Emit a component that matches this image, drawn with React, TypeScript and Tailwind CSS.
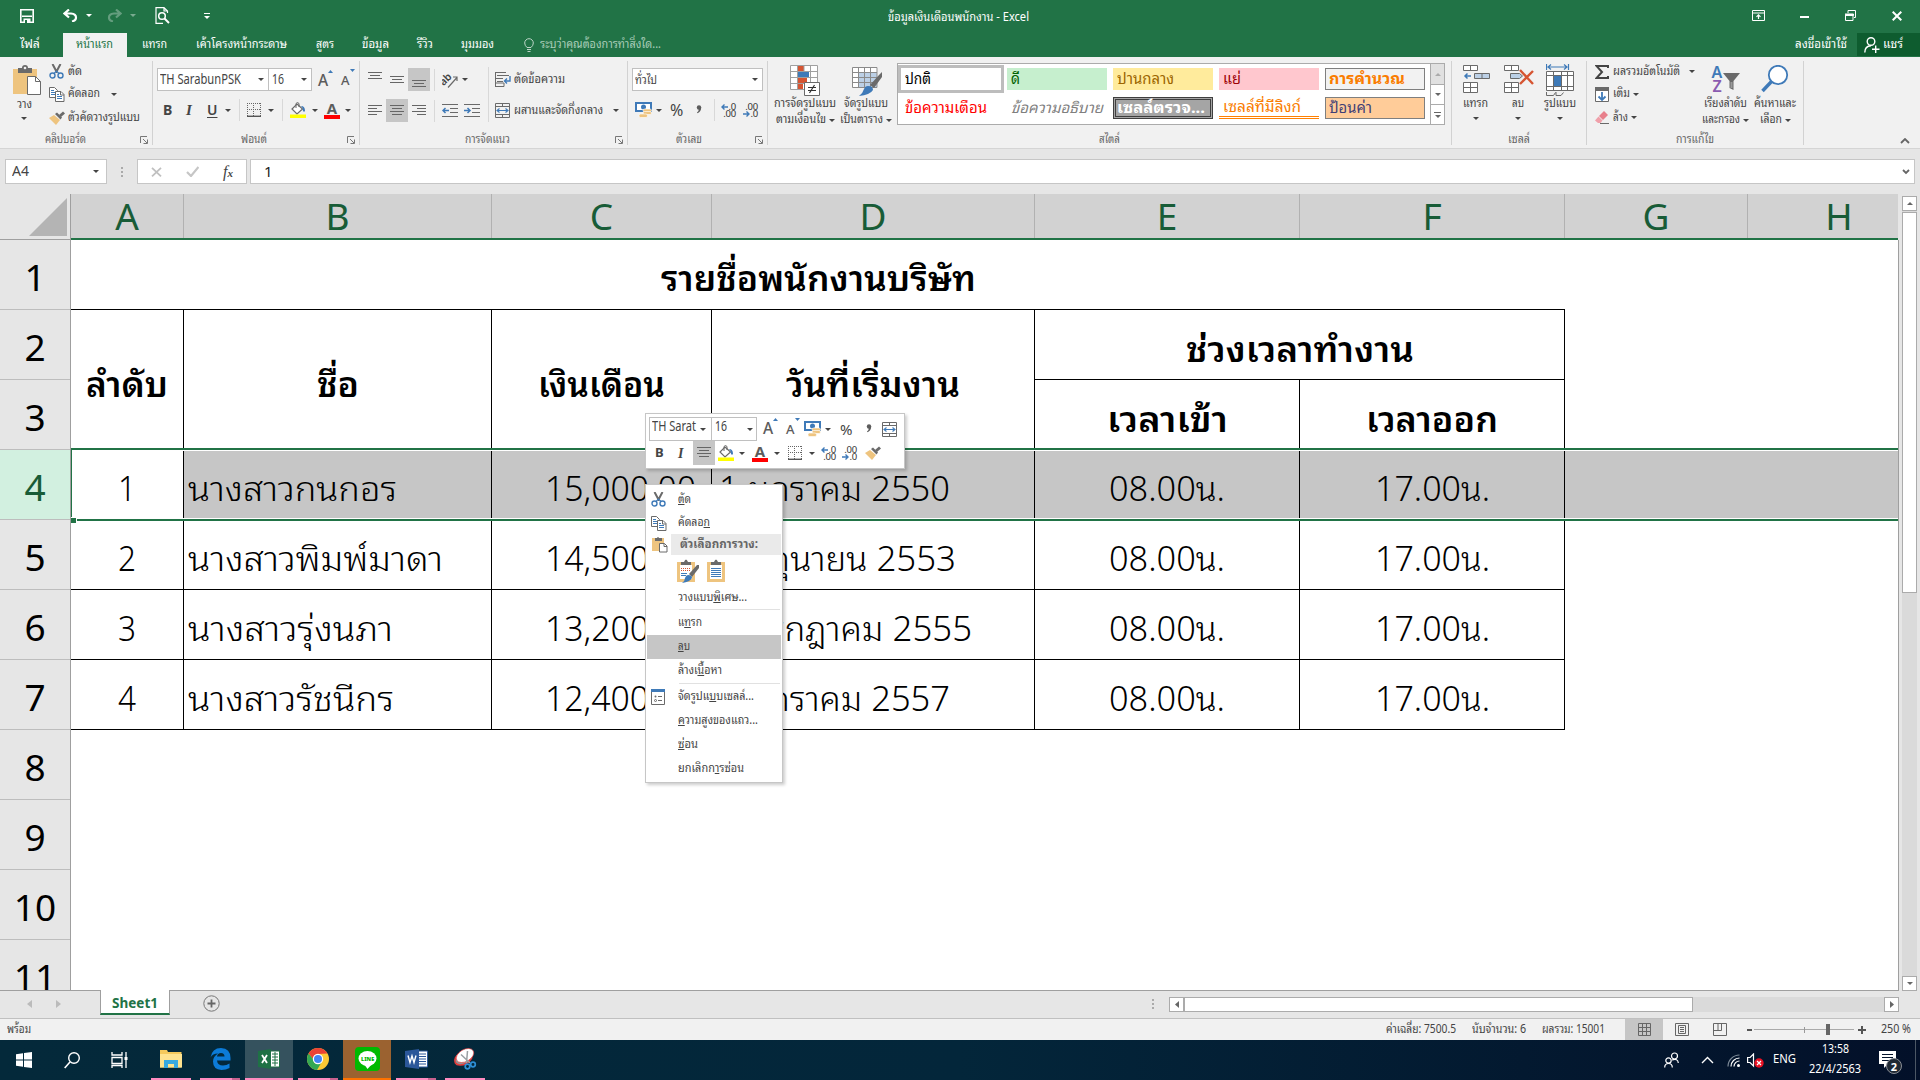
import { useLayoutEffect, useRef, useState, type ReactNode } from "react";
import clsx from "clsx";

type Kids = { children?: ReactNode; className?: string };

/* One line of text, condensed or widened to fill the width its box has. */
function Fit({ children, className }: Kids) {
  const box = useRef<HTMLSpanElement>(null);
  const inner = useRef<HTMLSpanElement>(null);
  const [scale, setScale] = useState(1);
  useLayoutEffect(() => {
    if (box.current && inner.current && inner.current.offsetWidth > 0) {
      setScale(box.current.clientWidth / inner.current.getBoundingClientRect().width);
    }
  }, []);
  return (
    <span ref={box} className={clsx("mb-[2px] block shrink-0 whitespace-nowrap", className)}>
      <span ref={inner} className="inline-block origin-left" style={{ transform: `scaleX(${scale})` }}>
        {children}
      </span>
    </span>
  );
}

function Down({ className }: { className?: string }) {
  return (
    <svg className={clsx("h-[3px] w-[6px] shrink-0", className)} viewBox="0 0 6 3" fill="currentColor">
      <path d="M0 0h6L3 3z" />
    </svg>
  );
}

function Icon({ w, h, className, children }: { w: number; h: number } & Kids) {
  return (
    <svg width={w} height={h} viewBox={`0 0 ${w} ${h}`} fill="none" className={clsx("shrink-0", className)}>
      {children}
    </svg>
  );
}

const G = "#6a6a6a";
const BL = "#3f7ab8";

function Scissors() {
  return (
    <Icon w={15} h={15}>
      <path d="M3.500 0 8 8.500M11.500 0 7 8.500" stroke={G} strokeWidth="2" />
      <circle cx="3.500" cy="11.500" r="2.500" stroke={BL} strokeWidth="1.400" />
      <circle cx="11.500" cy="11.500" r="2.500" stroke={BL} strokeWidth="1.400" />
      <path d="M5 9.500 7.500 7 10 9.500" stroke={BL} strokeWidth="1.200" />
    </Icon>
  );
}
function Copy() {
  return (
    <Icon w={16} h={15}>
      <path d="M.5.5h5l3 3V10.500h-8z" fill="#fff" stroke={G} />
      <path d="M2 3.500h3M2 5.500h4M2 7.500h4" stroke={BL} />
      <path d="M6.500 4.500h5.500l3 3v7H6.500z" fill="#fff" stroke={G} />
      <path d="M11.500 4.500v3.500h3.500" stroke={G} />
      <path d="M8 7.500h2M8 9.500h5M8 11.500h5" stroke={BL} />
    </Icon>
  );
}
function Brush() {
  return (
    <Icon w={16} h={14}>
      <path d="M0 7 5 4l6 5-4 5z" fill="#eec47f" />
      <path d="m6 3 2-1.500 5 5L11.500 8.500z" fill={G} />
      <path d="m10 4 4-3.500L16 2.500 12 6z" fill={G} />
    </Icon>
  );
}
function PasteBig() {
  return (
    <Icon w={28} h={31}>
      <path d="M0 4h24v25H0z" fill="#eec47f" />
      <path d="M5 3h4q0-3 3-3t3 3h4v5H5z" fill={G} />
      <circle cx="12" cy="3" r="1.300" fill="#f1f1f1" />
      <path d="M14.500 11.500h8l5 5v13h-13z" fill="#fff" stroke={G} />
      <path d="M22.500 11.500v5h5" stroke={G} />
    </Icon>
  );
}
function PasteSmall() {
  return (
    <Icon w={16} h={17}>
      <path d="M0 2h12v13H0z" fill="#eec47f" />
      <path d="M3 2h2q1-2 2 0h3v3H3z" fill={G} />
      <path d="M7.500 7.500h5l2.500 2.500v6H7.500z" fill="#fff" stroke={G} />
      <path d="M12 7.500v3h3" stroke={G} />
    </Icon>
  );
}
function Lines({ rows, w = 14 }: { rows: [number, number, number][]; w?: number }) {
  return (
    <Icon w={w} h={12}>
      {rows.map(([x1, x2, y]) => (
        <path key={y} d={`M${x1} ${y + 0.5}H${x2}`} stroke="#666" />
      ))}
    </Icon>
  );
}
const centerRows: [number, number, number][] = [[0, 14, 0], [2, 12, 3], [0, 14, 6], [2, 12, 9]];

function Borders() {
  return (
    <Icon w={14} h={14}>
      <path d="M0 .5h14M0 6.500h14M.5 0v13M6.500 0v13M13.500 0v13" stroke="#666" strokeDasharray="1 1" />
      <path d="M0 13.300h14" stroke="#555" strokeWidth="1.400" />
    </Icon>
  );
}
function Bucket() {
  return (
    <Icon w={16} h={16}>
      <path d="m7 2 5.500 5-5.500 5L2 7z" fill="#fff" stroke={G} strokeWidth="1.200" />
      <path d="M6 6V1.500Q7.500-.5 9 1.500V5" stroke={G} />
      <path d="M11 4q4 0 4 5-1 1.500-2 0l-.5-3z" fill={BL} />
      <path d="M0 12.500h16V16H0z" fill="#ff0" />
    </Icon>
  );
}
function FontColor() {
  return (
    <span className="flex h-[17px] w-4 shrink-0 flex-col items-center">
      <span className="text-[15px] leading-[13px] font-bold text-[#5c5c5c]">A</span>
      <span className="h-1 w-4 bg-[#f00]" />
    </span>
  );
}
function Grow({ up }: { up?: boolean }) {
  return (
    <span className="flex w-[14px] shrink-0 items-start text-[#5c5c5c]">
      <span className={up ? "text-[15.500px] leading-[20px] font-medium" : "text-[13px] leading-[22px] font-medium"}>A</span>
      <svg width="5" height="3" viewBox="0 0 5 3" className="shrink-0" fill={BL}>
        {up ? <path d="M0 3h5L2.500 0z" /> : <path d="M0 0h5L2.500 3z" />}
      </svg>
    </span>
  );
}
function Money() {
  return (
    <Icon w={17} h={16}>
      <path d="M1 1h15v8H1z" fill="#fff" stroke={BL} strokeWidth="2" />
      <circle cx="8.500" cy="5" r="2.500" fill={BL} />
      <g fill="#eec47f" stroke="#fff" strokeWidth=".6">
        <rect x="8" y="7" width="8.500" height="3" rx="1.500" />
        <rect x="8" y="9.500" width="8.500" height="3" rx="1.500" />
        <rect x="4" y="12" width="8.500" height="3.500" rx="1.500" />
      </g>
    </Icon>
  );
}
function CommaMark() {
  return (
    <Icon w={6} h={9}>
      <circle cx="3" cy="2.500" r="2.200" fill="#5c5c5c" />
      <path d="M5.200 2.500Q5.200 6.500 1.500 8.300L1 7.500Q3 6 2.800 4z" fill="#5c5c5c" />
    </Icon>
  );
}
function Merge() {
  return (
    <Icon w={15} h={15}>
      <path d="M.5.5h14v14H.5zM.5 3.500h14M.5 11.500h14M7.500 0v3.500M7.500 11.500V15" stroke={G} />
      <path d="M2 7.500h11M4.500 5.500 2 7.500 4.500 9.500M10.500 5.500 13 7.500 10.500 9.500" stroke={BL} strokeWidth="1.100" />
    </Icon>
  );
}
function Decimals({ less }: { less?: boolean }) {
  const arrow = (
    <svg width="7" height="6" viewBox="0 0 7 6" fill="none" stroke={BL} strokeWidth="1.400" className="shrink-0">
      {less ? <path d="M0 3h6M3.500.5 6 3 3.500 5.500" /> : <path d="M7 3H1M3.500.5 1 3l2.500 2.500" />}
    </svg>
  );
  return (
    <span className="-ml-px flex w-[15px] shrink-0 flex-col text-[9.500px] leading-[7px] tracking-tight text-[#333]">
      <span className="flex items-center justify-end">{less ? ".00" : <>{arrow}.0</>}</span>
      <span className="flex items-center justify-end">{less ? <>{arrow}.0</> : ".00"}</span>
    </span>
  );
}
function Launcher() {
  return (
    <Icon w={8} h={8}>
      <path d="M.5 7V.5H7" stroke="#777" />
      <path d="M3 3l4 4M7.500 3.500v4h-4" stroke="#777" />
    </Icon>
  );
}
function Divider({ className }: { className?: string }) {
  return <span className={clsx("w-px shrink-0 bg-[#d8d8d8]", className)} />;
}

function Group({ className, label, launcher, children }: { label: ReactNode; launcher?: boolean } & Kids) {
  return (
    <section className={clsx("flex h-[84px] shrink-0 flex-col border-r border-[#d2d2d2]", className)}>
      <div className="flex h-[70px] shrink-0">{children}</div>
      <div className="flex h-[18px] shrink-0 items-center">
        <span className="flex flex-1 justify-center text-[#666]">{label}</span>
        {launcher ? <span className="mr-1 -ml-[8px]"><Launcher /></span> : null}
      </div>
    </section>
  );
}

function BigButton({ className, icon, children }: { icon: ReactNode } & Kids) {
  return (
    <div className={clsx("flex shrink-0 flex-col items-center pt-1", className)}>
      <div className="flex h-[31px] shrink-0 items-start">{icon}</div>
      {children}
    </div>
  );
}

function TitleBar() {
  return (
    <header className="flex h-[33px] items-center text-white">
      <div className="flex w-[888px] items-center pb-[2px] pl-5">
        <Icon w={14} h={14}>
          <path d="M.8.8h12.400v12.400H.8z" stroke="#fff" strokeWidth="1.600" />
          <path d="M2 6.500h10v1.500H2zM3.500 9.500h7V14h-7z" fill="#fff" />
          <path d="M5 11h2v3H5z" fill="#217346" />
        </Icon>
        <Icon w={15} h={13} className="ml-[29px]">
          <path d="M6 .5 1.500 4.500 6 8.500M2 4.500h6q5 .5 5 4 0 3-4 4" stroke="#fff" strokeWidth="2.200" />
        </Icon>
        <Down className="ml-[8px] w-[5px]" />
        <Icon w={15} h={13} className="ml-[15px] opacity-30">
          <path d="M9 .5l4.500 4L9 8.500M13 4.500H7q-5 .5-5 4 0 3 4 4" stroke="#fff" strokeWidth="2.200" />
        </Icon>
        <Down className="ml-[8px] w-[5px] opacity-40" />
        <Icon w={15} h={17} className="ml-[19px]">
          <path d="M12.500 6V4L9 .7H1v15.600h7M9 .7V4h3.500" stroke="#fff" strokeWidth="1.200" />
          <circle cx="7" cy="9" r="3.300" stroke="#fff" strokeWidth="1.500" />
          <path d="m9.500 11.500 4.500 4.500" stroke="#fff" strokeWidth="2" />
        </Icon>
        <span className="ml-[34px] flex flex-col items-center gap-[2px]">
          <span className="h-px w-[6px] bg-white" />
          <Down />
        </span>
      </div>
      <Fit className="w-[141px] text-[13px] leading-5">ข้อมูลเงินเดือนพนักงาน - Excel</Fit>
      <div className="ml-auto flex items-center pr-[18px] pb-[2px]">
        <Icon w={13} h={11}>
          <path d="M.5.5h12v10H.5zM.5 3h12" stroke="#fff" />
          <path d="M6.500 9V5M4.500 6.800l2-2 2 2" stroke="#fff" strokeWidth="1.200" />
        </Icon>
        <span className="mt-[3px] ml-[35px] h-[2px] w-[9px] bg-white" />
        <Icon w={11} h={11} className="ml-9">
          <path d="M.5 4.500h7.500v6H.5z" stroke="#fff" />
          <path d="M0 4h8.500v1.500H0zM3 .5h7.500v7H9M3 .5V3" stroke="#fff" />
        </Icon>
        <Icon w={10} h={10} className="ml-9">
          <path d="m.7.7 8.600 8.600M9.300.7.7 9.300" stroke="#fff" strokeWidth="2" />
        </Icon>
      </div>
    </header>
  );
}

function MenuTabs() {
  return (
    <nav className="flex h-6 items-center text-[12px] leading-5 text-white">
      <Fit className="ml-5 w-5">ไฟล์</Fit>
      <div className="ml-[23px] flex h-6 w-16 items-center bg-[#f1f1f1] pl-[13px] text-[#217346]">
        <Fit className="w-[37px]">หน้าแรก</Fit>
      </div>
      <Fit className="ml-[15px] w-[25px]">แทรก</Fit>
      <Fit className="ml-[29px] w-[91px]">เค้าโครงหน้ากระดาษ</Fit>
      <Fit className="ml-[29px] w-[18px]">สูตร</Fit>
      <Fit className="ml-[28px] w-[27px]">ข้อมูล</Fit>
      <Fit className="ml-[28px] w-[16px]">รีวิว</Fit>
      <Fit className="ml-[28px] w-[33px]">มุมมอง</Fit>
      <Icon w={10} h={14} className="ml-[30px] opacity-70">
        <path d="M3 9.500Q.7 7.500.7 5A4.300 4.300 0 0 1 9.300 5Q9.300 7.500 7 9.500zM3 11.500h4M3.500 13.500h3" stroke="#fff" />
      </Icon>
      <Fit className="mb-0 ml-[6px] w-[121px] text-[#a9cdb8]">ระบุว่าคุณต้องการทำสิ่งใด...</Fit>
      <Fit className="ml-auto w-[52px]">ลงชื่อเข้าใช้</Fit>
      <div className="mb-px ml-[10px] flex h-[23px] w-[63px] items-center bg-[#0e5c2f] pl-[7px]">
        <Icon w={16} h={16}>
          <circle cx="7" cy="4.500" r="3.800" stroke="#fff" strokeWidth="1.400" />
          <path d="M.8 15.500Q.8 9 7 8.700M8 12.300h7.500M11.700 8.500V16" stroke="#fff" strokeWidth="1.400" />
        </Icon>
        <Fit className="ml-[3px] w-5">แชร์</Fit>
      </div>
    </nav>
  );
}

function Clipboard() {
  return (
    <Group className="w-[153px]" launcher label={<Fit className="-ml-[18px] w-[41px]">คลิปบอร์ด</Fit>}>
      <BigButton className="ml-3 w-[30px] text-[#444]" icon={<PasteBig />}>
        <Fit className="-ml-[5px] w-[15px] leading-[16px]">วาง</Fit>
        <Down className="mt-[3px] -ml-[6px]" />
      </BigButton>
      <div className="ml-[7px] flex flex-col text-[#444]">
        <div className="flex h-[21px] items-center gap-1"><Scissors /><Fit className="w-[14px]">ตัด</Fit></div>
        <div className="flex h-[24px] items-center gap-[3px]"><Copy /><Fit className="w-8">คัดลอก</Fit><Down className="ml-[8px]" /></div>
        <div className="flex h-[23px] items-center gap-[3px]"><Brush /><Fit className="w-[72px]">ตัวคัดวางรูปแบบ</Fit></div>
      </div>
    </Group>
  );
}

function FontGroup() {
  return (
    <Group className="w-[207px]" launcher label={<Fit className="w-[26px]">ฟอนต์</Fit>}>
      <div className="flex flex-col pt-[7px] pl-[4px] text-[#444]">
        <div className="flex h-[23px] items-center">
          <div className="flex h-[23px] w-[112px] items-center border border-[#c0c0c0] bg-white pl-[2px] text-[14px]">
            <Fit className="w-[81px]">TH SarabunPSK</Fit>
            <Down className="ml-[17px]" />
          </div>
          <div className="-ml-px flex h-[23px] w-[44px] items-center border border-[#c0c0c0] bg-white pl-[3px] text-[14px]">
            <Fit className="w-[12px]">16</Fit>
            <Down className="ml-[17px]" />
          </div>
          <span className="ml-[6px] flex items-center gap-[9px]"><Grow up /><Grow /></span>
        </div>
        <div className="mt-[7px] flex h-[24px] items-center">
          <span className="ml-[6px] w-[9px] text-[14px] font-bold">B</span>
          <span className="ml-[14px] w-[8px] font-['Liberation_Serif'] text-[15px] font-bold italic">I</span>
          <span className="ml-[13px] w-[10px] text-center text-[14px] font-semibold underline underline-offset-2">U</span>
          <Down className="ml-[8px]" />
          <Divider className="ml-[8px] h-[22px]" />
          <span className="ml-[7px]"><Borders /></span>
          <Down className="ml-[7px]" />
          <Divider className="ml-[8px] h-[22px]" />
          <span className="ml-[7px]"><Bucket /></span>
          <Down className="ml-[6px]" />
          <span className="ml-[6px]"><FontColor /></span>
          <Down className="ml-[5px]" />
        </div>
      </div>
    </Group>
  );
}

function AlignGroup() {
  return (
    <Group className="w-[268px]" launcher label={<Fit className="-ml-[8px] w-[45px]">การจัดแนว</Fit>}>
      <div className="flex flex-col pt-[7px] pl-[4px] text-[#444]">
        <div className="flex h-[23px] items-center">
          <span className="flex w-[22px] justify-center pb-[8px]"><Lines rows={[[0, 14, 2], [2, 12, 5], [0, 14, 8]]} /></span>
          <span className="flex w-[22px] justify-center"><Lines rows={[[0, 14, 2], [2, 12, 5], [0, 14, 8]]} /></span>
          <span className="flex h-[23px] w-[22px] items-end justify-center bg-[#c6c6c6] pb-[1px]"><Lines rows={[[0, 14, 2], [2, 12, 5], [0, 14, 8]]} /></span>
          <Divider className="ml-[4px] h-[22px]" />
          <span className="ml-[7px] flex h-[16px] w-[17px] items-center">
            <Icon w={17} h={16}>
              <text x="-2" y="10" transform="rotate(-45 5 8)" fontSize="10.500" fill="#444" fontWeight="600">ab</text>
              <path d="M6 15.500 15 5.500M11 5h4v4" stroke={G} strokeWidth="1.200" />
            </Icon>
          </span>
          <Down className="ml-[3px]" />
        </div>
        <div className="mt-[8px] flex h-[23px] items-center">
          <span className="flex w-[22px] justify-center"><Lines rows={[[0, 14, 0], [0, 9, 3], [0, 14, 6], [0, 9, 9]]} /></span>
          <span className="flex h-[23px] w-[22px] items-center justify-center bg-[#c6c6c6]"><Lines rows={centerRows} /></span>
          <span className="flex w-[22px] justify-center"><Lines rows={[[0, 14, 0], [5, 14, 3], [0, 14, 6], [5, 14, 9]]} /></span>
          <Divider className="ml-[4px] h-[22px]" />
          <Icon w={16} h={13} className="ml-[7px]">
            <path d="M0 .5h16M8 4.500h8M8 8.500h8M0 12.500h16" stroke={G} />
            <path d="M7 6.500H1M3.500 4 1 6.500 3.500 9" stroke={BL} strokeWidth="1.500" />
          </Icon>
          <Icon w={16} h={13} className="ml-[6px]">
            <path d="M0 .5h16M8 4.500h8M8 8.500h8M0 12.500h16" stroke={G} />
            <path d="M0 6.500h6M3.500 4 6 6.500 3.500 9" stroke={BL} strokeWidth="1.500" />
          </Icon>
        </div>
      </div>
      <Divider className="mt-[6px] ml-[8px] h-[55px]" />
      <div className="flex flex-col pt-[7px] pl-[6px] text-[#444]">
        <div className="flex h-[23px] items-center gap-[3px]">
          <Icon w={16} h={15}>
            <path d="M.5 0v15M0 .5h11M2 3.500h12M0 6.500h8M2 9.500h6M0 14.500h9V11H0" stroke={G} />
            <path d="M15 4v5h-5M12 6.500 9.500 9l2.500 2.500" stroke={BL} strokeWidth="1.400" />
          </Icon>
          <Fit className="w-[51px]">ตัดข้อความ</Fit>
        </div>
        <div className="mt-[8px] flex h-[23px] items-center gap-[4px]">
          <Merge />
          <Fit className="w-[89px]">ผสานและจัดกึ่งกลาง</Fit>
          <Down className="ml-[6px]" />
        </div>
      </div>
    </Group>
  );
}

function NumberGroup() {
  return (
    <Group className="w-[140px]" launcher label={<Fit className="-ml-[14px] w-[26px]">ตัวเลข</Fit>}>
      <div className="flex flex-col pt-[7px] pl-[4px] text-[#444]">
        <div className="flex h-[23px] w-[131px] items-center border border-[#c0c0c0] bg-white pl-[2px]">
          <Fit className="w-[22px] text-[13px]">ทั่วไป</Fit>
          <Down className="mr-[4px] ml-auto" />
        </div>
        <div className="mt-[7px] flex h-[24px] items-center">
          <span className="ml-[3px]"><Money /></span>
          <Down className="ml-[4px]" />
          <span className="ml-[8px] w-[14px] text-[16px]">%</span>
          <span className="ml-[12px] pb-[2px]"><CommaMark /></span>
          <Divider className="ml-[12px] h-[22px]" />
          <span className="ml-[7px] flex gap-[8px]"><Decimals /><Decimals less /></span>
        </div>
      </div>
    </Group>
  );
}

function Swatch({ className, children }: Kids) {
  return <div className={clsx("flex h-[22px] w-[100px] items-center pl-1 text-[15px]", className)}>{children}</div>;
}

function StylesGroup() {
  return (
    <Group className="w-[684px]" label={<Fit className="w-[21px]">สไตล์</Fit>}>
      <BigButton
        className="ml-[6px] w-[62px] text-[#444]"
        icon={
          <Icon w={30} h={31} className="mr-px">
            <path d="M0 .5h28v24H0z" fill="#fff" />
            <path d="M8 0h6v6H8zM8 12h9v6H8zM8 18h5v6H8z" fill="#d65532" />
            <path d="M8 6h11v6H8z" fill={BL} />
            <path d="M.5.5h27v24H.5zM7.500 0v24M14 0v6M20.500 0v24M0 6.500h28M0 12.500h28M0 18.500h28" stroke="#a0a0a0" />
            <path d="M14.500 17.500h15v13h-15z" fill="#fff" stroke={G} />
            <path d="M18 22.500h8M18 25.500h8M24.500 20l-5 8" stroke="#333" strokeWidth="1.200" />
          </Icon>
        }
      >
        <Fit className="w-[62px] leading-[14px]">การจัดรูปแบบ</Fit>
        <span className="flex items-center gap-[3px]"><Fit className="w-[50px] leading-[14px]">ตามเงื่อนไข</Fit><Down className="w-[5px]" /></span>
      </BigButton>
      <BigButton
        className="ml-[4px] w-[52px] text-[#444]"
        icon={
          <Icon w={31} h={29} className="mt-[2px] ml-[3px]">
            <path d="M.5.5h25v20H.5z" fill="#fff" />
            <path d="M7 6h18v15H7z" fill="#bcd0e6" />
            <path d="M.5.5h24.500v20H.5zM6.500 0v20M12.500 0v20M18.500 0v20M0 5.500h25M0 10.500h25M0 15.500h25" stroke="#8a8a8a" />
            <path d="m18 18 9-10 3-3v5l-8 11z" fill={G} />
            <path d="M16 19q5 0 5 4-3 5-14 6 4-3 5-7 1-3 4-3z" fill={BL} />
          </Icon>
        }
      >
        <Fit className="w-[44px] leading-[14px]">จัดรูปแบบ</Fit>
        <span className="flex items-center gap-[3px]"><Fit className="w-[43px] leading-[14px]">เป็นตาราง</Fit><Down className="w-[5px]" /></span>
      </BigButton>
      <div className="mt-[2px] ml-[5px] flex h-[62px] w-[548px] border border-[#ababab] bg-white">
        <div className="grid w-[532px] grid-cols-[103px_106px_106px_106px_106px] grid-rows-[30px_28px] items-center">
          <div className="flex h-[28px] w-[106px] items-center border-[3px] border-[#bdbdbd] pl-[4px] text-[15px]"><Fit className="w-[26px]">ปกติ</Fit></div>
          <Swatch className="ml-[6px] bg-[#c6efce] text-[#006100]"><Fit className="w-[9px]">ดี</Fit></Swatch>
          <Swatch className="ml-[6px] bg-[#ffeb9c] text-[#9c6500]"><Fit className="w-[57px]">ปานกลาง</Fit></Swatch>
          <Swatch className="ml-[6px] bg-[#ffc7ce] text-[#9c0006]"><Fit className="w-[18px]">แย่</Fit></Swatch>
          <Swatch className="ml-[6px] border border-[#7f7f7f] bg-[#f2f2f2] pl-[3px] font-bold text-[#fa7d00]"><Fit className="w-[76px]">การคำนวณ</Fit></Swatch>
          <Swatch className="ml-[3px] text-[#f00]"><Fit className="w-[82px]">ข้อความเตือน</Fit></Swatch>
          <Swatch className="ml-[6px] text-[#7f7f7f] italic"><Fit className="w-[92px]">ข้อความอธิบาย</Fit></Swatch>
          <Swatch className="ml-[6px] border-[3px] border-double border-[#3f3f3f] bg-[#a5a5a5] pl-[1px] font-bold text-white"><Fit className="w-[88px]">เซลล์ตรวจ...</Fit></Swatch>
          <Swatch className="ml-[6px] border-b-[3px] border-double border-[#ff8001] text-[#fa7d00]"><Fit className="w-[78px]">เซลล์ที่มีลิงก์</Fit></Swatch>
          <Swatch className="ml-[6px] border border-[#7f7f7f] bg-[#ffcc99] pl-[3px] text-[#3f3f76]"><Fit className="w-[43px]">ป้อนค่า</Fit></Swatch>
        </div>
        <div className="flex w-[14px] flex-col border-l border-[#ababab] text-[#666]">
          <span className="flex h-[20px] items-center justify-center bg-[#e1e1e1] text-[#ababab]"><Down className="rotate-180" /></span>
          <span className="flex h-[20px] items-center justify-center border-t border-[#ababab]"><Down /></span>
          <span className="flex h-[20px] flex-col items-center justify-center gap-[2px] border-t border-[#ababab]"><i className="h-px w-[7px] bg-[#666]" /><Down /></span>
        </div>
      </div>
    </Group>
  );
}

function CellsGroup() {
  return (
    <Group className="w-[135px]" label={<Fit className="w-[22px]">เซลล์</Fit>}>
      <BigButton
        className="ml-[10px] w-[28px] text-[#444]"
        icon={
          <Icon w={27} h={28}>
            <path d="M.5.5h14v5H.5zM7.500.5v5M.5 17.500h14v10H.5zM7.500 17.500v10M.5 22.500h14" fill="#fff" stroke={G} />
            <path d="M11.500 8.500h15v5h-15zM19 8.500v5" fill="#bcd0e6" stroke={G} />
            <path d="M8 11H2M4.500 8.500 2 11l2.500 2.500" stroke={BL} strokeWidth="1.500" />
          </Icon>
        }
      >
        <Fit className="-ml-px w-[25px] leading-[14px]">แทรก</Fit>
        <Down className="mt-[5px]" />
      </BigButton>
      <BigButton
        className="ml-[14px] w-[30px] text-[#444]"
        icon={
          <Icon w={30} h={28}>
            <path d="M.5.5h14v5H.5zM7.500.5v5M.5 17.500h14v10H.5zM7.500 17.500v10M.5 22.500h14" fill="#fff" stroke={G} />
            <path d="M6.500 8.500h9l3 2.500-3 2.500h-9z" fill="#bcd0e6" stroke={G} />
            <path d="M16 5 29 19M29 6 16 19" stroke="#d65532" strokeWidth="2.400" />
          </Icon>
        }
      >
        <Fit className="-ml-[2px] w-[12px] leading-[14px]">ลบ</Fit>
        <Down className="mt-[5px] -ml-[3px]" />
      </BigButton>
      <BigButton
        className="ml-[10px] w-[32px] text-[#444]"
        icon={
          <Icon w={28} h={32} className="-mt-px">
            <path d="M.5 0v6M22.500 0v6M2 3h19M5 .5 2 3l3 2.500M18 .5 21 3l-3 2.500" stroke={BL} strokeWidth="1.200" />
            <path d="M.5 7.500h27v19H.5z" fill="#fff" />
            <path d="M8 12h7v10H8z" fill={BL} />
            <path d="M.5 7.500h27v19H.5zM7.500 7v20M15.500 7v20M21.500 7v20M0 11.500h28M0 22.500h28" stroke={G} />
            <path d="M.5 28v3.500h7l2-3M10 28v3.500h5l2.500-3" stroke={G} />
          </Icon>
        }
      >
        <Fit className="w-[32px] leading-[14px]">รูปแบบ</Fit>
        <Down className="mt-[5px]" />
      </BigButton>
    </Group>
  );
}

function EditGroup() {
  return (
    <Group className="w-[217px]" label={<Fit className="w-[38px]">การแก้ไข</Fit>}>
      <div className="ml-[8px] flex w-[106px] flex-col text-[#444]">
        <div className="flex h-[21px] items-center">
          <Icon w={14} h={14}><path d="M13 3V1H1.500L7 7l-5.500 6H13v-2" stroke="#444" strokeWidth="2" /></Icon>
          <Fit className="ml-1 w-[67px]">ผลรวมอัตโนมัติ</Fit>
          <Down className="ml-[9px]" />
        </div>
        <div className="flex h-[24px] items-center">
          <Icon w={14} h={15}>
            <path d="M.5.5h13v14H.5z" fill="#fff" stroke={G} /><path d="M0 0h14v4H0z" fill={G} />
            <path d="M7 5v8M3.500 9.500 7 13l3.500-3.500" stroke={BL} strokeWidth="1.800" />
          </Icon>
          <Fit className="ml-1 w-[17px]">เติม</Fit>
          <Down className="ml-[3px]" />
        </div>
        <div className="flex h-[23px] items-center">
          <Icon w={14} h={13}>
            <path d="m4 5 5-5 4 4-5 5z" fill="#e8808c" /><path d="M3.500 5.500 7.500 9.500 5.500 12H3L0 9.500z" fill="#f0a0aa" /><path d="M5 12.500h9" stroke={G} />
          </Icon>
          <Fit className="ml-1 w-[15px]">ล้าง</Fit>
          <Down className="ml-[3px]" />
        </div>
      </div>
      <BigButton
        className="ml-[2px] w-[45px] text-[#444]"
        icon={
          <span className="flex h-[28px]">
            <span className="flex w-[11px] flex-col items-center text-[16px] leading-[14px]"><b className="font-semibold text-[#3f7ab8]">A</b><b className="font-semibold text-[#8a5bb0]">Z</b></span>
            <Icon w={17} h={18} className="mt-[7px]"><path d="M0 1h17l-6.500 8v9l-4-2V9z" fill={G} /><path d="M7.500 10v6h2v-6z" fill="#999" /></Icon>
          </span>
        }
      >
        <Fit className="w-[43px] leading-[14px]">เรียงลำดับ</Fit>
        <span className="flex items-center gap-[3px]"><Fit className="w-[38px] leading-[14px]">และกรอง</Fit><Down className="w-[5px]" /></span>
      </BigButton>
      <BigButton
        className="ml-[6px] w-[42px] text-[#444]"
        icon={
          <Icon w={28} h={28}>
            <circle cx="17" cy="10" r="9.200" fill="#fff" stroke={BL} strokeWidth="1.800" />
            <path d="M10.500 16.500 1.500 26" stroke={BL} strokeWidth="3.400" />
          </Icon>
        }
      >
        <Fit className="w-[42px] leading-[14px]">ค้นหาและ</Fit>
        <span className="flex items-center gap-[3px]"><Fit className="w-[22px] leading-[14px]">เลือก</Fit><Down className="w-[5px]" /></span>
      </BigButton>
    </Group>
  );
}

function Ribbon() {
  return (
    <div className="flex h-[92px] border-b border-[#d5d5d5] bg-[#f1f1f1] pt-[4px] text-[12px] leading-5">
      <Clipboard />
      <FontGroup />
      <AlignGroup />
      <NumberGroup />
      <StylesGroup />
      <CellsGroup />
      <EditGroup />
      <div className="flex flex-1 items-end justify-end pr-[10px] pb-[4px]">
        <Icon w={10} h={6}><path d="m1 5 4-4 4 4" stroke="#666" strokeWidth="1.800" /></Icon>
      </div>
    </div>
  );
}

function FormulaBar() {
  return (
    <div className="flex h-[45px] items-start bg-[#e6e6e6] pt-[10px] pl-[5px] text-[15px] text-[#444]">
      <div className="flex h-[25px] w-[102px] items-center border border-[#c6c6c6] bg-white pl-[6px]">
        <Fit className="mb-0 w-[17px]">A4</Fit>
        <Down className="mr-[7px] ml-auto" />
      </div>
      <div className="ml-[14px] flex h-[25px] w-[2px] flex-col justify-center gap-[2px]">
        <i className="size-[2px] bg-[#aaa]" /><i className="size-[2px] bg-[#aaa]" /><i className="size-[2px] bg-[#aaa]" />
      </div>
      <div className="ml-[14px] flex h-[25px] w-[110px] items-center border border-[#c6c6c6] bg-white">
        <Icon w={11} h={10} className="ml-[13px]"><path d="m1 .8 9 8.500M10 .8 1 9.300" stroke="#c0c0c0" strokeWidth="1.800" /></Icon>
        <Icon w={13} h={11} className="ml-6"><path d="m1 6 4 4 7.500-9" stroke="#c6c6c6" strokeWidth="2.200" /></Icon>
        <span className="ml-[24px] font-['Liberation_Serif'] text-[16px] italic">f<span className="text-[11px] font-bold">x</span></span>
      </div>
      <div className="ml-[3px] flex h-[25px] w-[1665px] items-center border border-[#c6c6c6] bg-white pl-[13px] text-[#222]">
        1
        <Icon w={8} h={6} className="mr-[4px] ml-auto"><path d="m1 1 3 3 3-3" stroke="#666" strokeWidth="1.800" /></Icon>
      </div>
    </div>
  );
}

const cols = [
  ["A", "w-[113px]"], ["B", "w-[308px]"], ["C", "w-[220px]"], ["D", "w-[323px]"],
  ["E", "w-[265px]"], ["F", "w-[265px]"], ["G", "w-[183px]"], ["H", "w-[183px]"],
];

const rows = [
  { n: "1", name: "นางสาวกนกอร", nw: "w-[209px]", pay: "15,000.00", date: "1 มกราคม 2550", dw: "w-[231px]" },
  { n: "2", name: "นางสาวพิมพ์มาดา", nw: "w-[255px]", pay: "14,500.00", date: "1 มิถุนายน 2553", dw: "w-[237px]" },
  { n: "3", name: "นางสาวรุ่งนภา", nw: "w-[205px]", pay: "13,200.00", date: "1 กรกฎาคม 2555", dw: "w-[253px]" },
  { n: "4", name: "นางสาวรัชนีกร", nw: "w-[206px]", pay: "12,400.00", date: "1 มกราคม 2557", dw: "w-[231px]" },
];

function Cell({ className, children }: Kids) {
  return <div className={clsx("flex items-center justify-center border-r border-b border-black", className)}>{children}</div>;
}

function Sheet() {
  return (
    <div className="flex h-[797px] bg-[#e6e6e6]">
      <div className="flex h-[797px] w-[1899px] flex-col overflow-hidden">
        <div className="flex h-[46px] shrink-0">
          <div className="flex w-[71px] shrink-0 items-end justify-end border-r border-b border-[#9f9f9f] pr-[3px] pb-[3px]">
            <svg width="38" height="38" viewBox="0 0 38 38"><path d="M38 0v38H0z" fill="#b4b4b4" /></svg>
          </div>
          <div className="flex w-[1827px] shrink-0 overflow-hidden border-b-2 border-[#217346] bg-[#d2d2d2]">
            {cols.map(([c, w]) => (
              <div key={c} className={clsx("flex shrink-0 items-center justify-center border-r border-[#b1b1b1] pb-[1px] text-[37px] leading-none text-[#185c37]", w)}>{c}</div>
            ))}
          </div>
        </div>
        <div className="flex h-[751px] shrink-0 border-b border-[#9f9f9f]">
          <div className="flex w-[71px] shrink-0 flex-col overflow-hidden border-r border-[#9f9f9f] text-[37px] leading-none text-black">
            {[1, 2, 3, 4, 5, 6, 7, 8, 9, 10, 11].map((n) => (
              <div key={n} className={clsx("flex h-[70px] shrink-0 items-center justify-center border-b border-[#bdbdbd] pt-[4px]", n === 4 && "bg-[#d2f0e0] text-[#185c37]")}>{n}</div>
            ))}
          </div>
          <div className="relative w-[1828px] shrink-0 overflow-hidden border-r border-[#9f9f9f] bg-white text-black">
            <div className="grid auto-rows-[70px] grid-cols-[113px_308px_220px_323px_265px_265px_333px] text-[34px] leading-none">
              <Cell className="col-span-6 border-r-0 pt-[9px] font-semibold"><Fit className="w-[315px]">รายชื่อพนักงานบริษัท</Fit></Cell>
              <div />
              <Cell className="row-span-2 pt-[11px] font-semibold"><Fit className="w-[82px]">ลำดับ</Fit></Cell>
              <Cell className="row-span-2 pt-[11px] font-semibold"><Fit className="w-[42px]">ชื่อ</Fit></Cell>
              <Cell className="row-span-2 pt-[11px] font-semibold"><Fit className="w-[127px]">เงินเดือน</Fit></Cell>
              <Cell className="row-span-2 pt-[11px] font-semibold"><Fit className="w-[174px]">วันที่เริ่มงาน</Fit></Cell>
              <Cell className="col-span-2 pt-[10px] font-semibold"><Fit className="w-[228px]">ช่วงเวลาทำงาน</Fit></Cell>
              <div className="row-span-2" />
              <Cell className="pt-[11px] font-semibold"><Fit className="w-[121px]">เวลาเข้า</Fit></Cell>
              <Cell className="pt-[11px] font-semibold"><Fit className="w-[132px]">เวลาออก</Fit></Cell>
              {rows.map((r, i) => {
                const tone = clsx("pt-[9px] font-light", i === 0 && "bg-[#c6c6c6]");
                return [
                  <Cell key={r.n} className="pt-[9px] font-light"><Fit className="w-[18px]">{r.n}</Fit></Cell>,
                  <Cell key={r.name} className={clsx(tone, "justify-start pl-[4px]")}><Fit className={r.nw}>{r.name}</Fit></Cell>,
                  <Cell key={r.pay} className={clsx(tone, "justify-end pr-[15px]")}><Fit className="w-[151px]">{r.pay}</Fit></Cell>,
                  <Cell key={r.date} className={clsx(tone, "justify-start pl-[7px]")}><Fit className={r.dw}>{r.date}</Fit></Cell>,
                  <Cell key={r.n + "in"} className={tone}><Fit className="w-[116px]">08.00น.</Fit></Cell>,
                  <Cell key={r.n + "out"} className={tone}><Fit className="w-[115px]">17.00น.</Fit></Cell>,
                  <div key={r.n + "rest"} className={clsx(i === 0 && "bg-[#c6c6c6]")} />,
                ];
              })}
            </div>
            <div className="absolute top-[208px] left-0 h-[73px] w-full border-y-2 border-[#217346]">
              <div className="h-full border-y border-white" />
            </div>
            <div className="absolute top-[208px] left-0 h-[70px] w-px bg-[#217346]" />
            <div className="absolute top-[277px] left-0 size-[6px] border-t border-r border-white bg-[#217346]" />
          </div>
        </div>
      </div>
      <div className="mt-[2px] ml-[3px] flex h-[795px] w-[15px] flex-col bg-[#dadada]">
        <span className="flex h-[15px] items-center justify-center border border-[#ababab] bg-white text-[#666]"><Down className="rotate-180" /></span>
        <span className="mt-px h-[381px] border border-[#ababab] bg-white" />
        <span className="mt-auto flex h-[15px] items-center justify-center border border-[#ababab] bg-white text-[#666]"><Down /></span>
      </div>
    </div>
  );
}

function SheetTabs() {
  return (
    <div className="flex h-[28px] items-start border-b border-[#c0c0c0] bg-[#e6e6e6]">
      <Icon w={5} h={8} className="mt-[9px] ml-[27px]"><path d="M5 0v8L0 4z" fill="#bbb" /></Icon>
      <Icon w={5} h={8} className="mt-[9px] ml-6"><path d="M0 0v8l5-4z" fill="#bbb" /></Icon>
      <div className="z-10 -mt-px ml-[39px] flex h-[25px] w-[70px] items-center justify-center border-x border-b-2 border-x-[#9f9f9f] border-b-[#217346] bg-white pt-[3px] text-[14px] font-bold text-[#217346]">
        <Fit className="w-[46px]">Sheet1</Fit>
      </div>
      <Icon w={17} h={17} className="mt-[4px] ml-[33px]">
        <circle cx="8.500" cy="8.500" r="7.700" stroke="#777" /><path d="M8.500 4.500v8M4.500 8.500h8" stroke="#666" strokeWidth="1.800" />
      </Icon>
      <div className="mt-[8px] ml-[932px] flex flex-col gap-[2px]">
        <i className="size-[2px] bg-[#aaa]" /><i className="size-[2px] bg-[#aaa]" /><i className="size-[2px] bg-[#aaa]" />
      </div>
      <div className="mt-[6px] ml-[15px] flex h-[15px] w-[730px] bg-[#dadada]">
        <span className="flex w-[15px] items-center justify-center border border-[#ababab] bg-white"><Icon w={4} h={7}><path d="M4 0v7L0 3.500z" fill="#666" /></Icon></span>
        <span className="w-[509px] border border-[#ababab] bg-white" />
        <span className="ml-auto flex w-[15px] items-center justify-center border border-[#ababab] bg-white"><Icon w={4} h={7}><path d="M0 0v7l4-3.500z" fill="#666" /></Icon></span>
      </div>
    </div>
  );
}

function StatusBar() {
  return (
    <div className="flex h-[21px] items-center bg-[#f1f1f1] text-[12px] leading-5 text-[#444]">
      <Fit className="mb-0 ml-[7px] w-[24px]">พร้อม</Fit>
      <Fit className="mb-0 ml-auto w-[70px]">ค่าเฉลี่ย: 7500.5</Fit>
      <Fit className="mb-0 ml-4 w-[54px]">นับจำนวน: 6</Fit>
      <Fit className="mb-0 ml-4 w-[63px]">ผลรวม: 15001</Fit>
      <div className="ml-5 flex h-[21px] w-[38px] items-center justify-center bg-[#c6c6c6]">
        <Icon w={13} h={13}><path d="M.5.5h12v12H.5zM4.500 0v13M8.500 0v13M0 4.500h13M0 8.500h13" stroke="#666" /></Icon>
      </div>
      <Icon w={14} h={13} className="ml-3"><path d="M.5.5h13v12H.5zM3.500 2.500h7v8h-7zM5 4.500h4M5 6.500h4M5 8.500h4" stroke="#666" /></Icon>
      <Icon w={14} h={13} className="ml-6"><path d="M.5.5h13v12H.5zM.5 7.500h8V.5M5 .5v7" stroke="#666" /></Icon>
      <span className="ml-5 h-[2px] w-[5px] bg-[#555]" />
      <Icon w={100} h={13} className="ml-[2px]">
        <path d="M0 6.500h100" stroke="#aaa" /><path d="M50.500 4v6" stroke="#999" /><path d="M72 1h4v11h-4z" fill="#666" />
      </Icon>
      <Icon w={8} h={8} className="ml-[4px]"><path d="M4 0v8M0 4h8" stroke="#555" strokeWidth="2" /></Icon>
      <Fit className="mr-[9px] mb-0 ml-[15px] w-[30px]">250 %</Fit>
    </div>
  );
}

function TaskButton({ className, bar, children }: { bar?: string } & Kids) {
  return (
    <div className={clsx("flex h-10 shrink-0 flex-col items-center", className)}>
      <span className="flex h-[38px] items-center">{children}</span>
      <span className={clsx("h-[2px] w-full", bar)} />
    </div>
  );
}

function Taskbar() {
  return (
    <footer className="flex h-10 bg-linear-to-r from-[#04293a] via-[#03263a] to-[#031029] text-white">
      <div className="flex h-10 items-center">
        <Icon w={16} h={16} className="ml-4"><path d="M0 2.300 7 1.200V7.600H0zM8 1 16 0v7.600H8zM0 8.500h7v6.300L0 13.800zM8 8.500h8V16l-8-1.100z" fill="#fff" /></Icon>
        <Icon w={17} h={17} className="ml-8"><circle cx="10" cy="6" r="5.300" stroke="#fff" strokeWidth="1.400" /><path d="M6 10 .7 16" stroke="#fff" strokeWidth="1.600" /></Icon>
        <Icon w={17} h={16} className="ml-[30px]">
          <path d="M1 0v3h10V0M1 5.500h10v6H1zM1 16v-2.500h10V16M15 0v16" stroke="#fff" strokeWidth="1.300" /><path d="M13.500 5h3v3h-3z" fill="#fff" />
        </Icon>
      </div>
      <TaskButton className="ml-[23px] w-10" bar="bg-[#ff8bc0]">
        <Icon w={22} h={18}>
          <path d="M0 0h7l1 2h13.500v15.500H0z" fill="#f5c95c" /><path d="M0 4h22v13.500H0z" fill="#ffe38f" /><path d="M4 18v-8h14v8h-4v-4H8v4z" fill="#39a9e0" />
        </Icon>
      </TaskButton>
      <TaskButton className="ml-[9px] w-10" bar="bg-linear-to-r from-[#ff8bc0] from-80% to-[#c9628f] to-80%">
        <Icon w={21} h={22}>
          <path d="M.5 9.500Q2 0 11 0q9.500.5 9.500 10v2.500H7q.5 5 6 5 3.500 0 6.500-2v4.500q-3.500 2-8 2-8.500-.5-8.500-8.500 0-5 5-8Q2.500 5.500.5 9.500zM7 8.500h7.500Q14.500 5 11 5 7.500 5 7 8.500z" fill="#0c7bd8" />
        </Icon>
      </TaskButton>
      <TaskButton className="ml-[5px] w-12 bg-[#35525e]" bar="bg-[#ff8bc0]">
        <Icon w={22} h={20}>
          <path d="M11 2h10.500v16H11z" fill="#fff" stroke="#1e7145" /><path d="M14 5h6M14 8h6M14 11h6M14 14h6M17 3v14" stroke="#1e7145" />
          <path d="m0 2 13-2v20L0 18z" fill="#1e7145" /><path d="m4 6 5 8M9 6l-5 8" stroke="#fff" strokeWidth="1.800" />
        </Icon>
      </TaskButton>
      <TaskButton className="ml-[5px] w-10" bar="bg-linear-to-r from-[#ff8bc0] from-80% to-[#c9628f] to-80%">
        <Icon w={22} h={22}>
          <circle cx="11" cy="11" r="11" fill="#fcc934" />
          <path d="M1.500 5.500A11 11 0 0 1 20.500 5.500L11 6q-4 0-5 5z" fill="#ea4335" />
          <path d="M1.500 5.500A11 11 0 0 0 10 22L15 13.500 11 16q-4 0-5-5z" fill="#34a853" />
          <circle cx="11" cy="11" r="5.200" fill="#fff" /><circle cx="11" cy="11" r="4" fill="#4285f4" />
        </Icon>
      </TaskButton>
      <TaskButton className="ml-[5px] w-12 bg-[#9b6230]" bar="bg-[#ff7200]">
        <span className="flex h-6 w-[25px] items-center justify-center rounded bg-[#00b900]">
          <Icon w={19} h={19}>
            <ellipse cx="9.500" cy="8.500" rx="9" ry="7.500" fill="#fff" /><path d="M6 14h8l-4.500 5z" fill="#fff" />
            <text x="3" y="10.500" fontSize="5.500" fontWeight="900" fill="#00b900">LINE</text>
          </Icon>
        </span>
      </TaskButton>
      <TaskButton className="ml-[5px] w-10" bar="bg-linear-to-r from-[#ff8bc0] from-80% to-[#c9628f] to-80%">
        <Icon w={23} h={20}>
          <path d="M12 2h10.500v16H12z" fill="#fff" stroke="#2b579a" /><path d="M14 5h7M14 7.500h7M14 10h7M14 12.500h7M14 15h7" stroke="#2b579a" />
          <path d="m0 2 14-2v20L0 18z" fill="#2b579a" /><path d="m3 6.500 2 7 2-6.500 2 6.500 2-7" stroke="#fff" strokeWidth="1.400" />
        </Icon>
      </TaskButton>
      <TaskButton className="ml-[9px] w-10" bar="bg-[#ff8bc0]">
        <Icon w={24} h={22}>
          <ellipse cx="10.500" cy="10" rx="9.500" ry="6" transform="rotate(-30 10.500 10)" fill="#8f9599" stroke="#e23b3b" strokeWidth="1.600" />
          <ellipse cx="12" cy="7.500" rx="9.500" ry="6" transform="rotate(-30 12 7.500)" fill="#fff" stroke="#e23b3b" strokeWidth=".6" />
          <path d="M8 6.500 17 15M14.500 3l-1 12" stroke="#9a9fa3" strokeWidth="1.500" />
          <circle cx="14.500" cy="18.500" r="2.300" stroke="#2e8fd6" strokeWidth="1.700" /><circle cx="20" cy="16.500" r="2.300" stroke="#2e8fd6" strokeWidth="1.700" />
        </Icon>
      </TaskButton>
      <div className="ml-auto flex h-10 items-center">
        <Icon w={15} h={16}>
          <circle cx="10.500" cy="4" r="3" stroke="#fff" strokeWidth="1.200" /><circle cx="4.500" cy="8.500" r="2.700" stroke="#fff" strokeWidth="1.200" />
          <path d="M.7 15.500q0-4 3.800-4t3.800 4M8 8q6-2 6.300 3" stroke="#fff" strokeWidth="1.200" />
        </Icon>
        <Icon w={13} h={8} className="ml-[22px]"><path d="m1 7 5.500-5.500L12 7" stroke="#fff" strokeWidth="1.400" /></Icon>
        <Icon w={13} h={13} className="ml-[13px]">
          <path d="M1 12.500A11.500 11.500 0 0 1 12.500 1" stroke="#7d8a97" strokeWidth="1.200" />
          <path d="M4 12.500A8.500 8.500 0 0 1 12.500 4M7 12.500A5.500 5.500 0 0 1 12.500 7" stroke="#fff" strokeWidth="1.200" /><circle cx="11.500" cy="11.500" r="1.500" fill="#fff" />
        </Icon>
        <Icon w={17} h={15} className="ml-[7px]">
          <path d="M.6 4.500h2.500L6.500 1v12L3 9.500H.6z" stroke="#fff" strokeWidth="1.200" />
          <circle cx="12" cy="10" r="4.700" fill="#e81123" /><path d="m10 8 4 4M14 8l-4 4" stroke="#fff" strokeWidth="1.200" />
        </Icon>
        <Fit className="mb-0 ml-[9px] w-[23px] text-[13px]">ENG</Fit>
        <div className="ml-[13px] flex w-[52px] flex-col items-center text-[12px] leading-[18px]">
          <Fit className="mb-0 w-[27px]">13:58</Fit>
          <Fit className="mb-0 w-[52px]">22/4/2563</Fit>
        </div>
        <div className="relative ml-[18px] h-[26px] w-6">
          <Icon w={17} h={17} className="absolute top-1 left-0"><path d="M0 0h17v13H9l-4 4v-4H0z" fill="#fff" /><path d="M3 3.500h11M3 6.500h11M3 9.500h8" stroke="#04142c" /></Icon>
          <span className="absolute top-[11px] left-[7px] flex size-[16px] items-center justify-center rounded-full border border-[#8b8f97] bg-[#1f2833] text-[11px] leading-none font-bold">2</span>
        </div>
        <span className="mr-1 ml-[12px] h-10 w-px bg-[#4c5765]" />
      </div>
    </footer>
  );
}

function MiniToolbar() {
  return (
    <div className="absolute top-[413px] left-[645px] flex h-[56px] w-[260px] flex-col border border-[#c6c6c6] bg-white pt-[3px] pl-[3px] text-[#444] shadow-[2px_2px_3px_rgba(0,0,0,0.2)]">
      <div className="flex h-[24px] items-center">
        <div className="flex h-[24px] w-[63px] items-center border border-[#c0c0c0] pl-[2px] text-[13.500px] leading-none">
          <Fit className="mb-[4px] w-[44px]">TH Sarat</Fit>
          <Down className="ml-[4px] w-[5px]" />
        </div>
        <div className="-ml-px flex h-[24px] w-[46px] items-center border border-[#c0c0c0] pl-[3px] text-[13.500px] leading-none">
          <Fit className="mb-[4px] w-[12px]">16</Fit>
          <Down className="ml-[20px] w-[5px]" />
        </div>
        <span className="ml-[6px] flex gap-[9px]"><Grow up /><Grow /></span>
        <span className="ml-[4px]"><Money /></span>
        <Down className="ml-[4px]" />
        <span className="ml-[9px] w-[14px] text-[15px]">%</span>
        <span className="ml-[12px] pb-[2px]"><CommaMark /></span>
        <span className="ml-[10px]"><Merge /></span>
      </div>
      <div className="flex h-[24px] items-center">
        <span className="ml-[6px] w-[9px] text-[13px] font-bold">B</span>
        <span className="ml-[14px] w-[7px] font-['Liberation_Serif'] text-[14px] font-bold italic">I</span>
        <span className="ml-[8px] flex h-[24px] w-[22px] items-center justify-center bg-[#c6c6c6]"><Lines rows={centerRows} /></span>
        <span className="ml-[3px]"><Bucket /></span>
        <Down className="ml-[5px]" />
        <span className="ml-[7px]"><FontColor /></span>
        <Down className="ml-[6px]" />
        <span className="ml-[8px]"><Borders /></span>
        <Down className="ml-[7px]" />
        <span className="ml-[7px] flex gap-[7px]"><Decimals /><Decimals less /></span>
        <span className="ml-[8px]"><Brush /></span>
      </div>
    </div>
  );
}

function Item({ icon, className, children }: { icon?: ReactNode } & Kids) {
  return (
    <div className={clsx("flex h-[24px] shrink-0 items-center", className)}>
      <span className="flex w-[27px] shrink-0 items-center">{icon}</span>
      {children}
    </div>
  );
}

function ContextMenu() {
  return (
    <div className="absolute top-[484px] left-[645px] flex h-[299px] w-[138px] flex-col border border-[#c6c6c6] bg-white pt-[2px] text-[12px] leading-5 text-[#444] shadow-[2px_2px_3px_rgba(0,0,0,0.2)]">
      <Item icon={<Scissors />} className="pl-[5px]"><Fit className="mb-px w-[13px]"><u>ต</u>ัด</Fit></Item>
      <Item icon={<Copy />} className="pl-[5px]"><Fit className="w-[32px]">คัดลอ<u>ก</u></Fit></Item>
      <div className="-mt-px flex h-[21px] shrink-0 items-center pl-[6px]">
        <span className="w-[19px] shrink-0"><PasteSmall /></span>
        <div className="flex h-[21px] w-[110px] items-center bg-[#eaeaea] pl-[9px] font-bold text-[#666]"><Fit className="w-[78px]">ตัวเลือกการวาง:</Fit></div>
      </div>
      <div className="flex h-[31px] shrink-0 items-center gap-[8px] pl-[31px]">
        <Icon w={22} h={24}>
          <path d="M0 3h18v20H0z" fill="#eec47f" /><path d="M3 6h12v14H3z" fill="#fff" /><path d="M4 3h3q2-5 4 0h3v3H4z" fill={G} />
          <path d="M4 9.500h10M4 11.500h10" stroke="#d65532" strokeDasharray="1 1" /><path d="M4 14.500h6M4 16.500h5" stroke={BL} />
          <path d="m12 15 8-9h2v3l-7 9z" fill={G} /><path d="M11 16q4 0 4 3-2 4-10 5 3-2 3-5 1-3 3-3z" fill={BL} />
        </Icon>
        <Icon w={18} h={24}>
          <path d="M0 3h18v20H0z" fill="#eec47f" /><path d="M3 6h12v14H3z" fill="#fff" /><path d="M4 3h3q2-5 4 0h3v3H4z" fill={G} />
          <path d="M4 9.500h10M4 11.500h10M4 13.500h10M4 15.500h10M4 17.500h10" stroke={BL} />
        </Icon>
      </div>
      <Item className="pl-[5px]"><Fit className="w-[69px]">วางแบบ<u>พิ</u>เศษ...</Fit></Item>
      <div className="-mt-px mr-[2px] mb-[1px] ml-[33px] h-px shrink-0 bg-[#e1e1e1]" />
      <Item className="pl-[5px]"><Fit className="w-[24px]">แ<u>ท</u>รก</Fit></Item>
      <Item className="mx-[1px] bg-[#c6c6c6] pl-[4px]"><Fit className="mb-0 w-[12px]"><u>ล</u>บ</Fit></Item>
      <Item className="pl-[5px]"><Fit className="mb-0 w-[44px]">ล้างเ<u>นื้</u>อหา</Fit></Item>
      <div className="mr-[2px] mb-[1px] ml-[33px] h-px shrink-0 bg-[#e1e1e1]" />
      <Item
        className="pl-[5px]"
        icon={
          <Icon w={15} h={17}>
            <path d="M.5.5h13v15H.5z" fill="#fff" stroke={G} /><path d="M0 0h14v3H0z" fill={BL} />
            <path d="M7 7.500h4M7 11.500h4" stroke={G} /><circle cx="4.500" cy="7.500" r="1" fill={G} /><circle cx="4.500" cy="11.500" r="1" stroke={G} />
          </Icon>
        }
      >
        <Fit className="mb-0 w-[76px]">จัดรูปแ<u>บ</u>บเซลล์...</Fit>
      </Item>
      <Item className="pl-[5px]"><Fit className="mb-0 w-[80px]"><u>ค</u>วามสูงของแถว...</Fit></Item>
      <Item className="pl-[5px]"><Fit className="mb-0 w-[20px]"><u>ซ่</u>อน</Fit></Item>
      <Item className="pl-[5px]"><Fit className="mb-0 w-[66px]">ยกเลิกก<u>า</u>รซ่อน</Fit></Item>
    </div>
  );
}

export default function App() {
  return (
    <div className="relative flex h-[1080px] w-[1920px] flex-col overflow-hidden bg-[#217346] font-['Noto_Sans','Noto_Sans_Thai_Looped','Loma','Noto_Sans_Thai',sans-serif]">
      <TitleBar />
      <MenuTabs />
      <Ribbon />
      <FormulaBar />
      <Sheet />
      <SheetTabs />
      <StatusBar />
      <Taskbar />
      <MiniToolbar />
      <ContextMenu />
    </div>
  );
}
